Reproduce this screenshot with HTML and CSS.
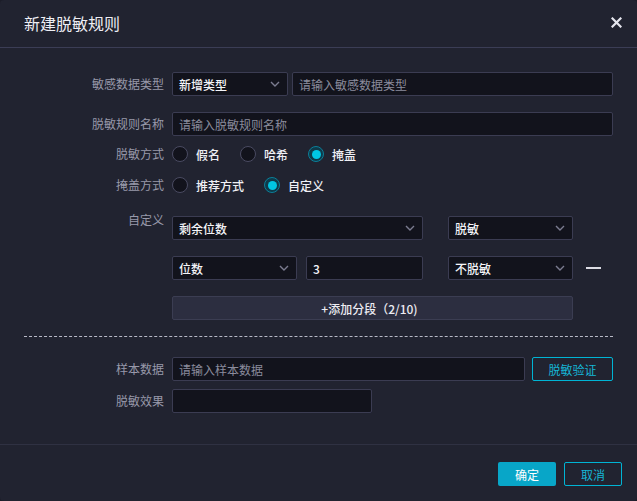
FILE: index.html
```html
<!DOCTYPE html>
<html lang="zh-CN">
<head>
<meta charset="utf-8">
<title>新建脱敏规则</title>
<link rel="stylesheet" href="styles.css">
</head>
<body>
<div class="dialog">
  <div class="header">
    <div class="title">新建脱敏规则</div>
    <svg class="close" width="11" height="11" viewBox="0 0 11 11"><path d="M1.5 1.5 L9.5 9.5 M9.5 1.5 L1.5 9.5" stroke="#e6e6ee" stroke-width="2.2" stroke-linecap="square"/></svg>
  </div>
  <div class="body">
    <div class="row r1">
      <div class="label">敏感数据类型</div>
      <div class="select w116"><span class="val">新增类型</span><svg class="chev" width="10" height="6" viewBox="0 0 10 6"><path d="M1 1 L5 5 L9 1" fill="none" stroke="#7b7c90" stroke-width="1.4"/></svg></div>
      <div class="input grow ml4"><span class="ph">请输入敏感数据类型</span></div>
    </div>
    <div class="row r2">
      <div class="label">脱敏规则名称</div>
      <div class="input grow"><span class="ph">请输入脱敏规则名称</span></div>
    </div>
    <div class="row r3">
      <div class="label">脱敏方式</div>
      <div class="radios">
        <span class="radio"><i class="dot"></i>假名</span>
        <span class="radio"><i class="dot"></i>哈希</span>
        <span class="radio on"><i class="dot"></i>掩盖</span>
      </div>
    </div>
    <div class="row r4">
      <div class="label">掩盖方式</div>
      <div class="radios">
        <span class="radio"><i class="dot"></i>推荐方式</span>
        <span class="radio on"><i class="dot"></i>自定义</span>
      </div>
    </div>
    <div class="row r5 top">
      <div class="label lab-top">自定义</div>
      <div class="custom">
        <div class="crow">
          <div class="select w251"><span class="val">剩余位数</span><svg class="chev" width="10" height="6" viewBox="0 0 10 6"><path d="M1 1 L5 5 L9 1" fill="none" stroke="#7b7c90" stroke-width="1.4"/></svg></div>
          <div class="select w125 ml25"><span class="val">脱敏</span><svg class="chev" width="10" height="6" viewBox="0 0 10 6"><path d="M1 1 L5 5 L9 1" fill="none" stroke="#7b7c90" stroke-width="1.4"/></svg></div>
        </div>
        <div class="crow">
          <div class="select w125"><span class="val">位数</span><svg class="chev" width="10" height="6" viewBox="0 0 10 6"><path d="M1 1 L5 5 L9 1" fill="none" stroke="#7b7c90" stroke-width="1.4"/></svg></div>
          <div class="input w117 ml9"><span class="val">3</span></div>
          <div class="select w125 ml25"><span class="val">不脱敏</span><svg class="chev" width="10" height="6" viewBox="0 0 10 6"><path d="M1 1 L5 5 L9 1" fill="none" stroke="#7b7c90" stroke-width="1.4"/></svg></div>
          <span class="minus"></span>
        </div>
        <div class="add">+添加分段（2/10)</div>
      </div>
    </div>
    <div class="dash"></div>
    <div class="row r8">
      <div class="label">样本数据</div>
      <div class="input w353"><span class="ph">请输入样本数据</span></div>
      <div class="btn-outline verify">脱敏验证</div>
    </div>
    <div class="row r9">
      <div class="label">脱敏效果</div>
      <div class="input w200"></div>
    </div>
  </div>
  <div class="footer">
    <div class="btn primary">确定</div>
    <div class="btn-outline cancel">取消</div>
  </div>
</div>
</body>
</html>
```

FILE: styles.css
```css
* { box-sizing: border-box; margin: 0; padding: 0; }
html, body { width: 637px; height: 501px; background: #1c1d28; overflow: hidden; }
body {
  font-family: "Noto Sans CJK SC", "Noto Sans", "Liberation Sans", sans-serif;
  font-size: 12px;
  color: #e9e9f0;
}
.dialog {
  width: 637px;
  height: 501px;
  background: #212330;
  border-radius: 4px;
  display: flex;
  flex-direction: column;
}
.header {
  height: 48px;
  border-bottom: 1px solid #3b3d55;
  display: flex;
  align-items: center;
  justify-content: space-between;
  padding: 0 15px 2px 24px;
}
.title { font-size: 16px; color: #eeeef4; line-height: 20px; }
.close { display: block; }
.body {
  flex: 1;
  padding: 24px 24px 0 24px;
  display: flex;
  flex-direction: column;
}
.row { display: flex; align-items: center; height: 24px; }
.row.top { align-items: flex-start; height: auto; }
.label {
  width: 140px;
  margin-right: 8px;
  text-align: right;
  color: #9899aa;
  flex: none;
  line-height: 16px;
}
.lab-top { margin-top: -4px; }
.r2 { margin-top: 16px; }
.r3 { margin-top: 6px; }
.r4 { margin-top: 7px; }
.r5 { margin-top: 19px; }
.dash { margin-top: 16px; border-top: 1px dashed #b8b9c6; height: 0; }
.r8 { margin-top: 20px; }
.r9 { margin-top: 8px; }

.input, .select {
  height: 24px;
  background: #12131c;
  border: 1px solid #3b3c52;
  border-radius: 2px;
  display: flex;
  align-items: center;
  padding: 0 7px 0 6px;
  flex: none;
}
.select { justify-content: space-between; }
.grow { flex: 1; }
.ml4 { margin-left: 4px; }
.ml9 { margin-left: 9px; }
.ml25 { margin-left: 25px; }
.w116 { width: 116px; }
.w251 { width: 251px; }
.w125 { width: 125px; }
.w117 { width: 117px; }
.w353 { width: 353px; }
.w200 { width: 200px; }
.ph { color: #8b8c9c; }
.val { color: #f4f4f8; font-weight: 500; }
.chev { display: block; flex: none; }

.radios { display: flex; align-items: center; gap: 20px; }
.radio { display: flex; align-items: center; color: #f0f0f5; font-weight: 500; }
.dot {
  width: 16px; height: 16px;
  border-radius: 50%;
  border: 1px solid #4a4b62;
  background: #12131c;
  margin-right: 8px;
  display: flex;
  align-items: center;
  justify-content: center;
}
.radio.on .dot { border-color: #0b7f99; background: #0e3a4a; }
.radio.on .dot::after {
  content: "";
  width: 9px; height: 9px;
  border-radius: 50%;
  background: #00c6e4;
}

.custom { display: flex; flex-direction: column; gap: 16px; }
.crow { display: flex; align-items: center; }
.minus {
  width: 15px; height: 2px;
  background: #dcdce4;
  margin-left: 13px;
}
.add {
  width: 401px;
  height: 24px;
  background: #2c2e40;
  border: 1px solid #3b3d52;
  border-radius: 2px;
  display: flex;
  align-items: center;
  justify-content: center;
  color: #ececf2;
  font-weight: 500;
  padding-right: 6px;
}

.btn-outline {
  height: 24px;
  border: 1px solid #00b4d4;
  border-radius: 2px;
  display: flex;
  align-items: center;
  justify-content: center;
  color: #15b6d6;
  flex: none;
}
.verify { width: 81px; margin-left: 7px; }
.footer {
  height: 57px;
  border-top: 1px solid #2f3142;
  display: flex;
  justify-content: flex-end;
  align-items: flex-start;
  padding: 17px 15px 0 0;
  gap: 8px;
}
.btn {
  height: 24px;
  width: 58px;
  border-radius: 2px;
  display: flex;
  align-items: center;
  justify-content: center;
}
.primary { background: #08a6c8; color: #ffffff; }
.cancel { width: 58px; }
```
